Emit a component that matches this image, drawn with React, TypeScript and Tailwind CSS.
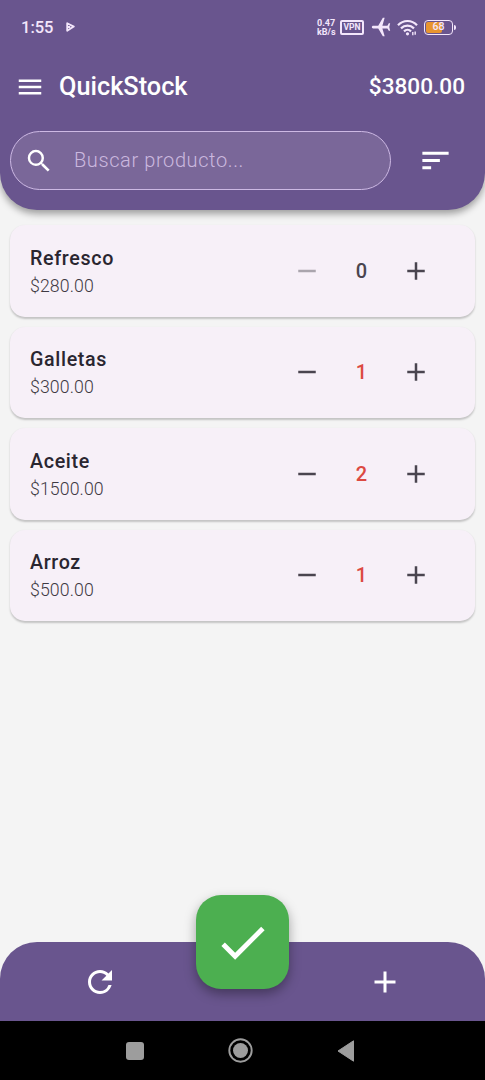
import { useState } from 'react'
import { MdAdd, MdAirplanemodeActive, MdCheck, MdMenu, MdRefresh, MdRemove, MdSearch, MdSort } from 'react-icons/md'

interface Product {
  name: string
  price: number
  quantity: number
}

const initialProducts: Product[] = [
  { name: 'Refresco', price: 280, quantity: 0 },
  { name: 'Galletas', price: 300, quantity: 1 },
  { name: 'Aceite', price: 1500, quantity: 2 },
  { name: 'Arroz', price: 500, quantity: 1 },
]

function StatusBar() {
  return (
    <div className="flex h-[54px] items-center justify-between pl-[21px] pr-[29px] text-[#f3e6fb]">
      <div className="flex items-center gap-[13px] pt-[2px]">
        <span className="text-[16.5px] font-medium leading-5">1:55</span>
        <svg className="mb-[2px]" width="9" height="10" viewBox="0 0 9 10" fill="none" stroke="currentColor" strokeWidth="1.8" strokeLinejoin="round">
          <path d="M1.2 1.2 7.8 4.6 1.2 8.8ZM1.2 5h3" />
        </svg>
      </div>
      <div className="flex items-center">
        <div className="w-[18px] pt-px text-[9px] font-bold leading-[8.5px]">
          <div>0.47</div>
          <div>kB/s</div>
        </div>
        <div className="ml-[5px] flex h-[15px] w-6 items-center justify-center rounded-[2px] border-2 border-current text-[8.5px] font-bold leading-none">
          VPN
        </div>
        <MdAirplanemodeActive className="ml-[6px] -rotate-90" size={22} />
        <svg className="ml-[5px]" width="21" height="17" viewBox="0 0 21 17" fill="none" stroke="currentColor" strokeWidth="2.2">
          <path d="M1 6.2C6.2 .6 14.8 .6 20 6.2M4 9.4C7.7 5.7 13.3 5.7 17 9.4M7 12.4C9 10.4 12 10.4 14 12.4" />
          <circle cx="10.5" cy="14.8" r="1.6" fill="currentColor" stroke="none" />
          <path d="M15.8 13v3.2M18.2 12.5v3.2" strokeWidth="1.4" />
        </svg>
        <div className="ml-[6px] flex items-center">
          <div className="relative flex h-[15px] w-[29px] items-center justify-center overflow-hidden rounded-[4px] border-[1.5px] border-current">
            <div className="absolute inset-y-px left-px w-[16px] rounded-[2px] bg-[#e8952f]" />
            <span className="relative pt-px text-[10.5px] font-medium leading-none">68</span>
          </div>
          <div className="ml-px h-[5px] w-[2px] rounded-r bg-current" />
        </div>
      </div>
    </div>
  )
}

function ProductCard({ product, onChange }: { product: Product; onChange: (delta: number) => void }) {
  const empty = product.quantity === 0
  return (
    <div className="flex h-[91.5px] items-center justify-between rounded-[15px] bg-[#f7f0f8] pl-5 pr-[44.5px] shadow-[0_1.5px_2px_rgba(0,0,0,0.2)]">
      <div className="pt-[3px]">
        <h2 className="text-[19.7px] font-medium leading-7 tracking-[0.65px] text-[#2a2630]">{product.name}</h2>
        <p className="text-[17.7px] font-light leading-[27px] tracking-[0.1px] text-[#3f3a44]">${product.price.toFixed(2)}</p>
      </div>
      <div className="flex items-center text-[#4a454f]">
        <button disabled={empty} onClick={() => onChange(-1)} className="disabled:text-[#aaa5ad]">
          <MdRemove size={30} />
        </button>
        <span className={`w-[79px] pl-px text-center text-[20px] font-medium ${empty ? '' : 'text-[#dc4a42]'}`}>
          {product.quantity}
        </span>
        <button onClick={() => onChange(1)}>
          <MdAdd size={30} />
        </button>
      </div>
    </div>
  )
}

function SystemNav() {
  return (
    <div className="flex h-[59px] items-center bg-black pl-[126px] text-[#9d9d9d]">
      <div className="h-[18px] w-[18px] rounded-[3px] bg-current" />
      <svg className="ml-[84px]" width="25" height="25" viewBox="0 0 25 25">
        <circle cx="12.5" cy="12.5" r="11.2" fill="none" stroke="currentColor" strokeWidth="1.9" />
        <circle cx="12.5" cy="12.5" r="7.5" fill="currentColor" />
      </svg>
      <svg className="ml-[84px]" width="18" height="22" viewBox="0 0 18 22" fill="currentColor">
        <path d="M16.5.8v20.4L1 11Z" stroke="currentColor" strokeLinejoin="round" />
      </svg>
    </div>
  )
}

export default function App() {
  const [products, setProducts] = useState(initialProducts)
  const [search, setSearch] = useState('')

  const total = products.reduce((sum, p) => sum + p.price * p.quantity, 0)
  const visible = products.filter((p) => p.name.toLowerCase().includes(search.toLowerCase()))

  const changeQuantity = (name: string, delta: number) => {
    setProducts(products.map((p) => (p.name === name ? { ...p, quantity: Math.max(0, p.quantity + delta) } : p)))
  }

  return (
    <div className="flex h-screen flex-col bg-[#f4f4f4] font-['Roboto',sans-serif]">
      <header className="h-[210px] rounded-b-[37px] bg-[#69558e] text-white shadow-[0_4px_7px_rgba(0,0,0,0.35)]">
        <StatusBar />
        <div className="flex h-16 items-center pl-[15px] pr-5 pt-px">
          <MdMenu size={30} />
          <h1 className="ml-[14px] text-[25.3px] font-medium">QuickStock</h1>
          <span className="ml-auto text-[22.6px] font-medium">${total.toFixed(2)}</span>
        </div>
        <div className="flex items-center pl-[10px] pt-[13px]">
          <div className="flex h-[59px] w-[381px] items-center rounded-full border border-[#cdb9e4] bg-[#7a6799] pl-[13px]">
            <MdSearch size={30} />
            <input
              value={search}
              onChange={(e) => setSearch(e.target.value)}
              placeholder="Buscar producto..."
              className="mb-px ml-5 w-[280px] bg-transparent text-[20px] font-light tracking-[0.6px] outline-none placeholder:text-[#cbb8df]"
            />
          </div>
          <button className="ml-[27px]">
            <MdSort size={35} />
          </button>
        </div>
      </header>

      {/* Product list */}
      <main className="flex flex-1 flex-col gap-[10px] px-[10px] pt-[15px]">
        {visible.map((product) => (
          <ProductCard key={product.name} product={product} onChange={(delta) => changeQuantity(product.name, delta)} />
        ))}
      </main>

      {/* Bottom bar */}
      <div className="relative flex h-[79px] items-center justify-between rounded-t-[37px] bg-[#69558e] px-[82px] text-white">
        <button onClick={() => setProducts(initialProducts)}>
          <MdRefresh size={36} />
        </button>
        <button className="absolute left-[196px] top-[-47px] flex h-[94px] w-[93px] items-center justify-center rounded-[25px] bg-[#4caf50] shadow-[0_5px_12px_rgba(0,0,0,0.35)]">
          <MdCheck size={59} />
        </button>
        <button>
          <MdAdd size={36} />
        </button>
      </div>
      <SystemNav />
    </div>
  )
}
